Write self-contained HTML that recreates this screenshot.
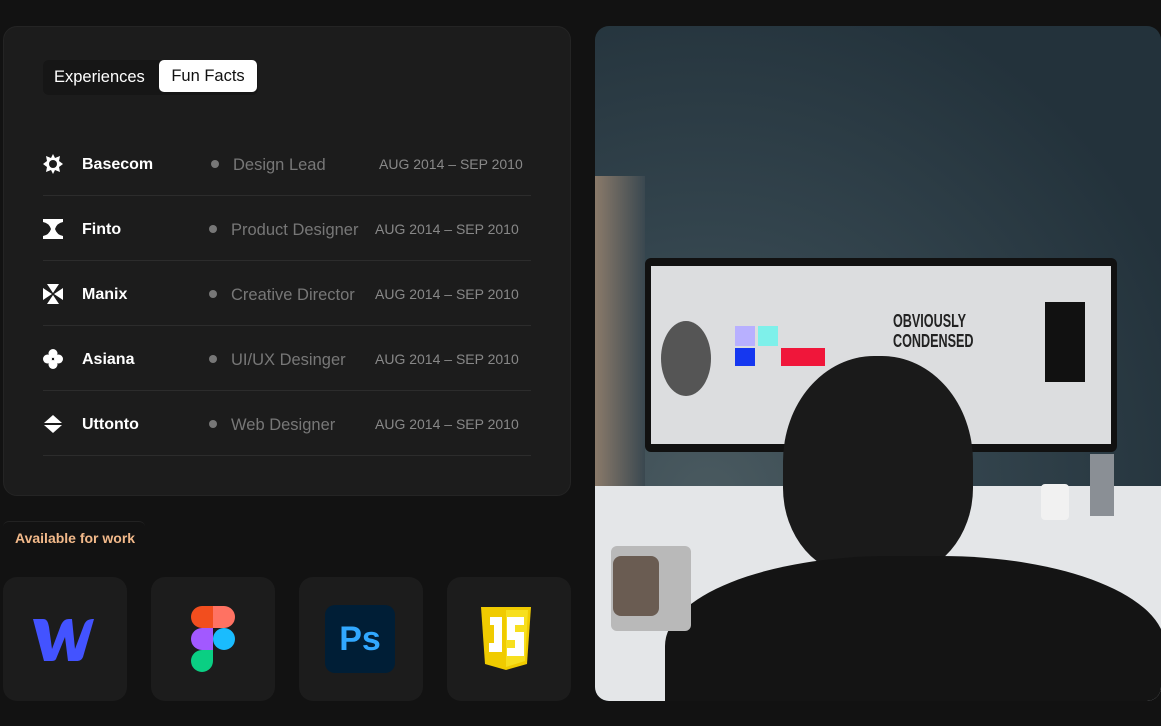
<!DOCTYPE html>
<html><head><style>
*{margin:0;padding:0;box-sizing:border-box}
body{width:1161px;height:726px;background:#121212;font-family:"Liberation Sans",sans-serif;position:relative;overflow:hidden}
.card{position:absolute;left:3px;top:26px;width:568px;height:470px;background:#1c1c1c;border-radius:14px;border:1px solid #242424}
.tabs{position:absolute;left:43px;top:60px;width:215px;height:35px;background:#161616;border-radius:6px}
.tab1{position:absolute;left:11px;top:8px;color:#fff;font-size:16.5px}
.tab2{position:absolute;left:116px;top:0;width:98px;height:32px;background:#fff;border-radius:5px;color:#111;font-size:16.5px;line-height:32px;text-align:center}
.row{position:absolute;left:43px;width:488px;height:65px;border-bottom:1px solid #2c2c2c}
.row svg{position:absolute;left:0;top:23px}
.name{position:absolute;left:39px;top:25px;color:#fff;font-weight:bold;font-size:16px}
.dot{position:absolute;top:29px;width:8px;height:8px;border-radius:50%;background:#777}
.role{position:absolute;top:25px;color:#777;font-size:16.5px}
.date{position:absolute;top:25px;color:#888;font-size:14px}
.avail{position:absolute;left:3px;top:521px;width:142px;height:32px;border-top:1px solid #222;border-radius:6px;color:#f2b98a;font-weight:bold;font-size:14px;padding:8px 0 0 12px}
.tool{position:absolute;top:577px;width:124px;height:124px;background:#1c1c1c;border-radius:14px}
.photo{position:absolute;left:595px;top:26px;width:566px;height:675px;border-radius:14px;overflow:hidden;background:radial-gradient(ellipse at 20% 70%,#4a5a60 0%,#33444d 40%,#23323b 80%)}
</style></head><body>
<div class="card"></div>
<div class="tabs"><div class="tab1">Experiences</div><div class="tab2">Fun Facts</div></div>

<div class="row" style="top:131px">
<svg width="20" height="20" viewBox="0 0 20 20"><path d="M10 0l2 4 5-2-1 5 4 3-4 3 1 5-5-2-2 4-2-4-5 2 1-5-4-3 4-3-1-5 5 2z" fill="#fff"/><circle cx="10" cy="10" r="4" fill="#1c1c1c"/></svg>
<div class="name">Basecom</div><div class="dot" style="left:168px"></div><div class="role" style="left:190px">Design Lead</div><div class="date" style="left:336px">AUG 2014 – SEP 2010</div></div>

<div class="row" style="top:196px">
<svg width="20" height="20" viewBox="0 0 20 20"><path d="M0 0h20v3q-6 1-8 7 2 6 8 7v3H0v-3q6-1 8-7-2-6-8-7z" fill="#fff"/></svg>
<div class="name">Finto</div><div class="dot" style="left:166px"></div><div class="role" style="left:188px">Product Designer</div><div class="date" style="left:332px">AUG 2014 – SEP 2010</div></div>

<div class="row" style="top:261px">
<svg width="20" height="20" viewBox="0 0 20 20"><path d="M4 0h12l-6 9zM4 20h12l-6-9zM0 4l9 6-9 6zM20 4l-9 6 9 6z" fill="#fff"/></svg>
<div class="name">Manix</div><div class="dot" style="left:166px"></div><div class="role" style="left:188px">Creative Director</div><div class="date" style="left:332px">AUG 2014 – SEP 2010</div></div>

<div class="row" style="top:326px">
<svg width="20" height="20" viewBox="0 0 20 20"><circle cx="10" cy="4.5" r="4.5" fill="#fff"/><circle cx="10" cy="15.5" r="4.5" fill="#fff"/><circle cx="4.5" cy="10" r="4.5" fill="#fff"/><circle cx="15.5" cy="10" r="4.5" fill="#fff"/></svg>
<div class="name">Asiana</div><div class="dot" style="left:166px"></div><div class="role" style="left:188px">UI/UX Desinger</div><div class="date" style="left:332px">AUG 2014 – SEP 2010</div></div>

<div class="row" style="top:391px">
<svg width="20" height="20" viewBox="0 0 20 20"><path d="M10 1l9 8H1zM1 11h18l-9 8z" fill="#fff"/></svg>
<div class="name">Uttonto</div><div class="dot" style="left:166px"></div><div class="role" style="left:188px">Web Designer</div><div class="date" style="left:332px">AUG 2014 – SEP 2010</div></div>

<div class="avail">Available for work</div>

<div class="tool" style="left:3px"><svg style="position:absolute;left:29px;top:38px" width="66" height="48" viewBox="0 0 66 48"><path d="M1 4h10c4 0 5 3 6 8l3 22 9-24c2-4 4-6 8-6h3l3 30 9-24c2-5 5-6 10-6L51 42c-2 4-4 4-8 4h-7l-3-24-9 22c-1 2-3 2-6 2h-6z" fill="#4353ff"/></svg></div>
<div class="tool" style="left:151px"><svg style="position:absolute;left:40px;top:29px" width="44" height="66" viewBox="0 0 44 66"><path d="M11 0h11v22H11a11 11 0 010-22z" fill="#f24e1e"/><path d="M22 0h11a11 11 0 010 22H22z" fill="#ff7262"/><path d="M11 22h11v22H11a11 11 0 010-22z" fill="#a259ff"/><circle cx="33" cy="33" r="11" fill="#1abcfe"/><path d="M11 44h11v11a11 11 0 11-11-11z" fill="#0acf83"/></svg></div>
<div class="tool" style="left:299px"><div style="position:absolute;left:26px;top:28px;width:70px;height:68px;background:#001e36;border-radius:10px;color:#31a8ff;font-weight:bold;font-size:34px;text-align:center;line-height:68px">Ps</div></div>
<div class="tool" style="left:447px"><svg style="position:absolute;left:34px;top:30px" width="56" height="64" viewBox="0 0 56 64"><path d="M0 0h50l-4 57-21 6-21-6z" fill="#f0cb00"/><path d="M25 3h22l-3 51-19 6z" fill="#f7df1e"/><path d="M9 10h12v35H8v-9h5V18h-4zM26 10h17v8H34v7h9v24H26v-8h8v-8h-8z" fill="#fff"/></svg></div>

<div class="photo">
<div style="position:absolute;left:0;top:460px;width:566px;height:215px;background:#e4e6e8"></div>
<div style="position:absolute;left:0;top:150px;width:50px;height:310px;background:linear-gradient(90deg,#8a7a6a,#3a4850)"></div>
<div style="position:absolute;left:50px;top:232px;width:472px;height:194px;background:#111;border-radius:6px"></div>
<div style="position:absolute;left:56px;top:240px;width:460px;height:178px;background:#dcdddf"></div>
<div style="position:absolute;left:140px;top:300px;width:20px;height:20px;background:#b8b0ff"></div>
<div style="position:absolute;left:186px;top:322px;width:44px;height:18px;background:#f0163a"></div>
<div style="position:absolute;left:163px;top:300px;width:20px;height:20px;background:#7ef0ea"></div>
<div style="position:absolute;left:140px;top:322px;width:20px;height:18px;background:#1537f0"></div>
<div style="position:absolute;left:298px;top:285px;font-size:18px;font-weight:bold;color:#222;line-height:20px;transform:scaleX(.7);transform-origin:left">OBVIOUSLY<br>CONDENSED</div>
<div style="position:absolute;left:450px;top:276px;width:40px;height:80px;background:#111"></div>
<div style="position:absolute;left:66px;top:295px;width:50px;height:75px;border-radius:50%;background:#555"></div>
<div style="position:absolute;left:188px;top:330px;width:190px;height:220px;border-radius:48% 48% 40% 40%;background:#1a1a1a"></div>
<div style="position:absolute;left:70px;top:530px;width:500px;height:200px;border-radius:45% 45% 0 0;background:#141414"></div>
<div style="position:absolute;left:16px;top:520px;width:80px;height:85px;background:#b9b9b9;border-radius:6px"></div>
<div style="position:absolute;left:18px;top:530px;width:46px;height:60px;background:#6a5c52;border-radius:8px"></div>
<div style="position:absolute;left:495px;top:428px;width:24px;height:62px;background:#8a8f95"></div>
<div style="position:absolute;left:446px;top:458px;width:28px;height:36px;background:#f1f1f1;border-radius:4px"></div>
</div>
</body></html>
